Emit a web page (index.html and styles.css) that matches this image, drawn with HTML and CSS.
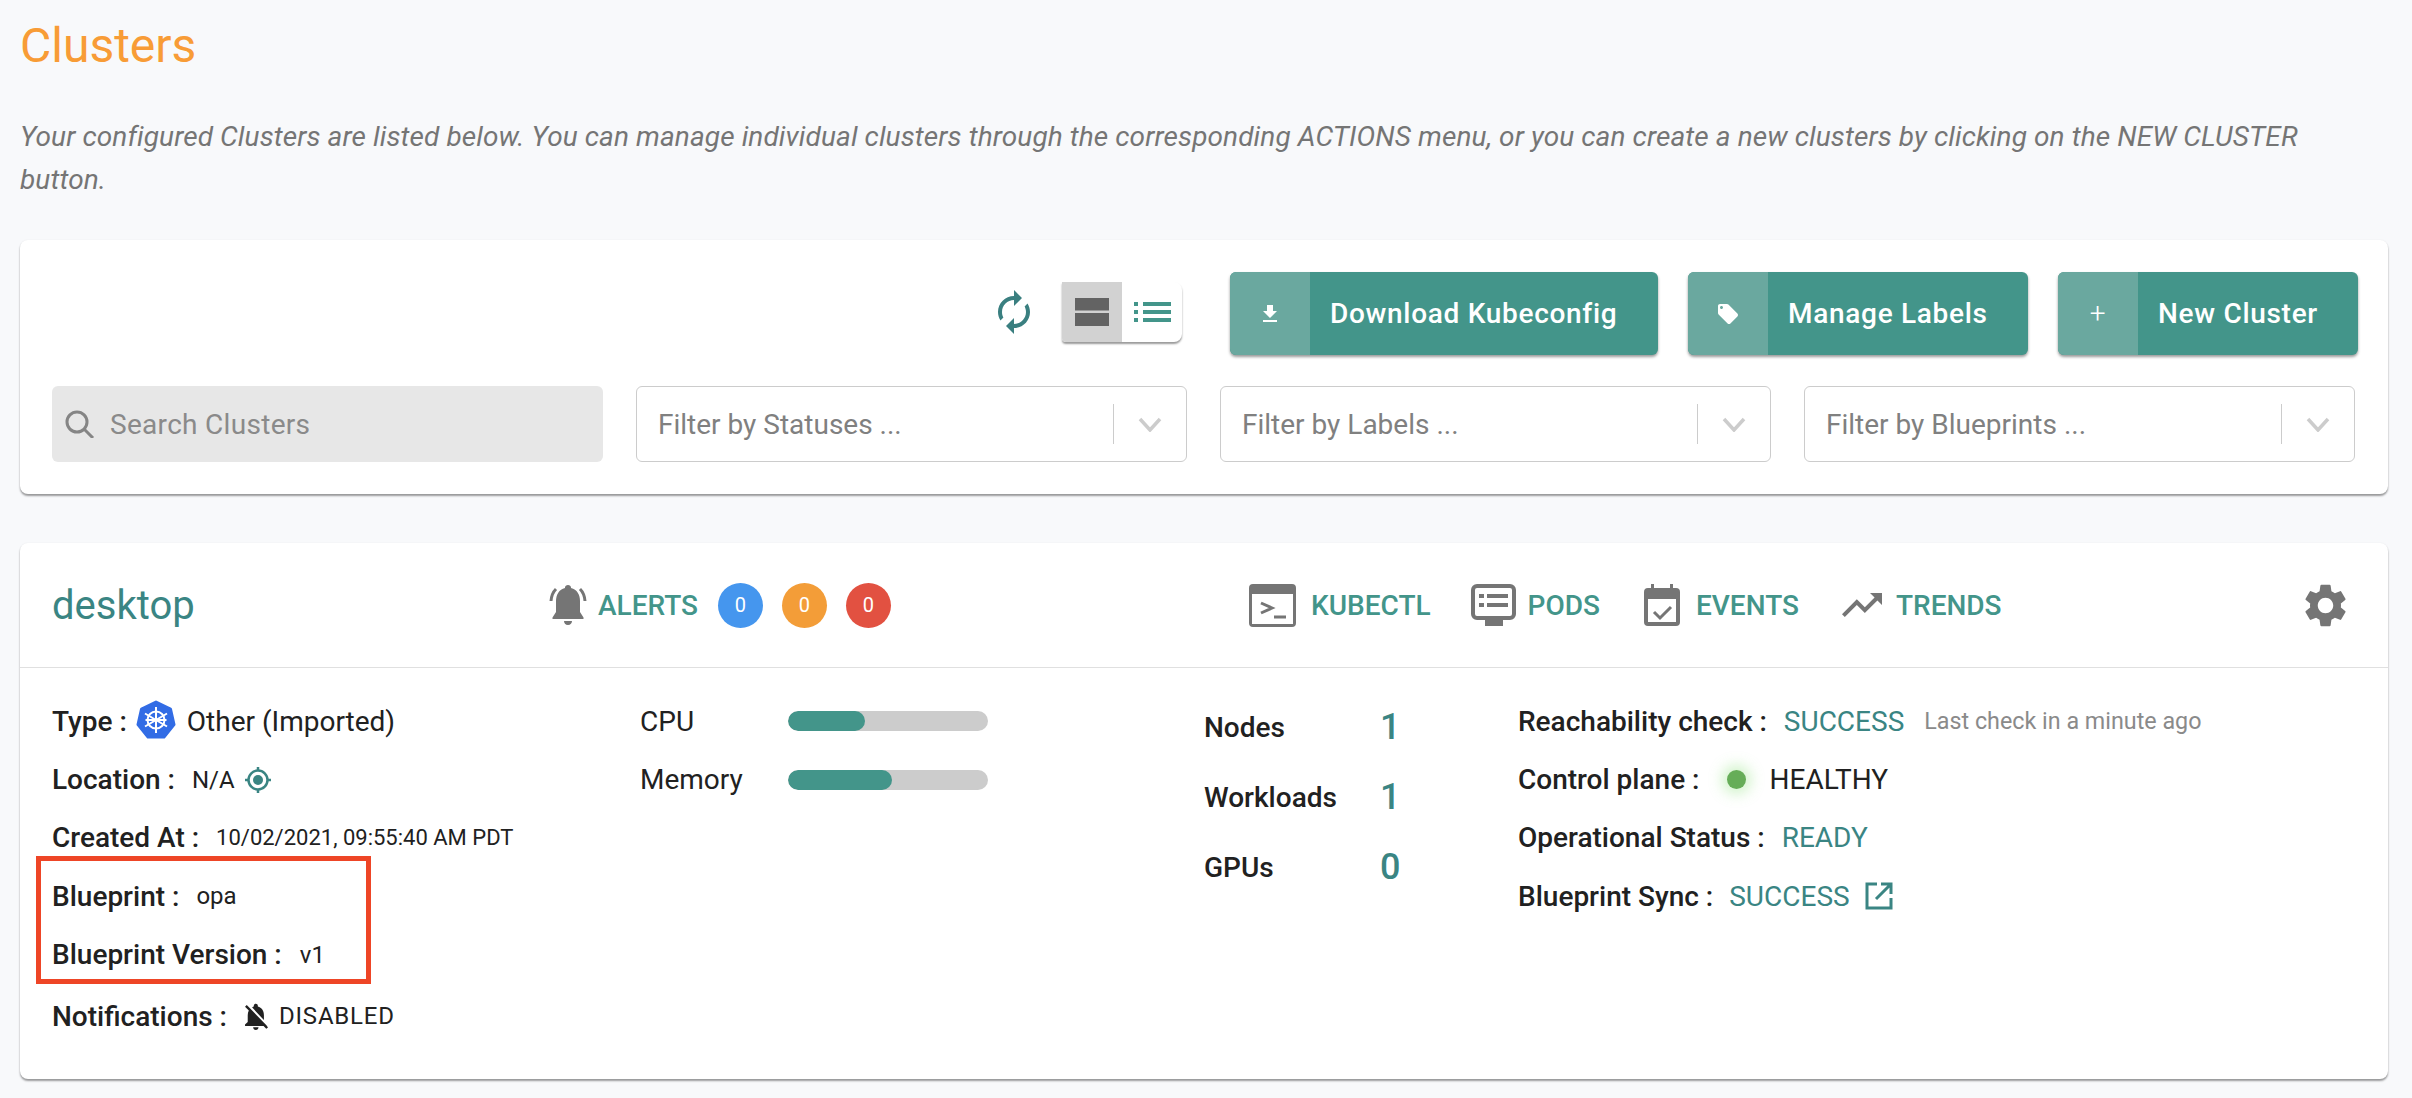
FILE: index.html
```html
<!DOCTYPE html>
<html lang="en">
<head>
<meta charset="utf-8">
<title>Clusters</title>
<link rel="stylesheet" href="styles.css">
</head>
<body>
<main class="page">
  <h1 class="title">Clusters</h1>
  <p class="intro">Your configured Clusters are listed below. You can manage individual clusters through the corresponding ACTIONS menu, or you can create a new clusters by clicking on the NEW CLUSTER button.</p>

  <section class="card toolbar">
    <div class="actions">
      <svg class="refresh" viewBox="0 0 24 24"><path d="M12 6v3l4-4-4-4v3c-4.42 0-8 3.58-8 8 0 1.57.46 3.03 1.24 4.26L6.7 14.8c-.45-.83-.7-1.79-.7-2.8 0-3.31 2.69-6 6-6zm6.76 1.74L17.3 9.2c.44.84.7 1.79.7 2.8 0 3.31-2.69 6-6 6v-3l-4 4 4 4v-3c4.42 0 8-3.58 8-8 0-1.57-.46-3.03-1.24-4.26z"/></svg>
      <div class="toggle">
        <span class="toggle-on"><svg class="toggle-icon" viewBox="0 0 34 28"><rect width="34" height="12.5"/><rect y="15" width="34" height="13"/></svg></span>
        <span class="toggle-off"><svg class="toggle-icon" viewBox="0 0 37 20"><rect width="4" height="4"/><rect x="9" width="28" height="4"/><rect y="8" width="4" height="4"/><rect x="9" y="8" width="28" height="4"/><rect y="16" width="4" height="4"/><rect x="9" y="16" width="28" height="4"/></svg></span>
      </div>
      <button class="btn btn-download"><span class="btn-icon"><svg class="glyph" viewBox="0 0 24 24"><path d="M19 9h-4V3H9v6H5l7 7 7-7zM5 18v2h14v-2H5z"/></svg></span><span class="btn-label">Download Kubeconfig</span></button>
      <button class="btn btn-labels"><span class="btn-icon"><svg class="glyph" viewBox="0 0 24 24"><path d="M21.41 11.58l-9-9C12.05 2.22 11.55 2 11 2H4c-1.1 0-2 .9-2 2v7c0 .55.22 1.05.59 1.42l9 9c.36.36.86.58 1.41.58s1.05-.22 1.41-.59l7-7c.37-.36.59-.86.59-1.41s-.23-1.06-.59-1.42zM5.5 7C4.67 7 4 6.33 4 5.5S4.67 4 5.5 4 7 4.67 7 5.5 6.33 7 5.5 7z"/></svg></span><span class="btn-label">Manage Labels</span></button>
      <button class="btn btn-new"><span class="btn-icon btn-plus">+</span><span class="btn-label">New Cluster</span></button>
    </div>
    <div class="filters">
      <div class="search">
        <svg class="search-icon" viewBox="0 0 30 28"><circle cx="12" cy="12" r="10"/><path d="M19 19l9 9"/></svg>
        <span>Search Clusters</span>
      </div>
      <div class="select"><span class="select-text">Filter by Statuses ...</span><span class="select-sep"></span><svg class="chevron" viewBox="0 0 24 15"><path d="M2 2l10 11L22 2"/></svg></div>
      <div class="select"><span class="select-text">Filter by Labels ...</span><span class="select-sep"></span><svg class="chevron" viewBox="0 0 24 15"><path d="M2 2l10 11L22 2"/></svg></div>
      <div class="select"><span class="select-text">Filter by Blueprints ...</span><span class="select-sep"></span><svg class="chevron" viewBox="0 0 24 15"><path d="M2 2l10 11L22 2"/></svg></div>
    </div>
  </section>

  <section class="card cluster">
    <header class="cluster-head">
      <h2 class="cluster-name">desktop</h2>
      <div class="alerts">
        <svg class="bell" viewBox="0 0 44 40"><path d="M22 40c2.600 0 4-1.700 4-4h-8c0 2.300 1.400 4 4 4zM34 27V16c0-6.400-3-11.700-9-13.100V2.500C25 1 23.700 0 22 0s-3 1-3 2.500v.4C13 4.300 10 9.600 10 16v11l-3.500 5.500V34h31v-1.500L34 27z"/><path class="bell-wave" d="M5 16c.4-5 2-9 5-12M39 16c-.4-5-2-9-5-12"/></svg>
        <span class="link-label alerts-label">ALERTS</span>
        <span class="dot dot-blue">0</span>
        <span class="dot dot-orange">0</span>
        <span class="dot dot-red">0</span>
      </div>
      <nav class="links">
        <a class="link link-kubectl"><svg class="terminal" viewBox="0 0 47 43"><path fill-rule="evenodd" d="M4 0h39a4 4 0 0 1 4 4v35a4 4 0 0 1-4 4H4a4 4 0 0 1-4-4V4a4 4 0 0 1 4-4zM3 10v30h41V10z"/><path class="icon-stroke" d="M12 19l11 5-11 5M25 33h12"/></svg><span class="link-label">KUBECTL</span></a>
        <a class="link link-pods"><svg class="pods" viewBox="0 0 45 42"><path fill-rule="evenodd" d="M6 0h33a6 6 0 0 1 6 6v24a6 6 0 0 1-6 6h-7v6H14v-6H6a6 6 0 0 1-6-6V6a6 6 0 0 1 6-6zM6 4a2 2 0 0 0-2 2v24a2 2 0 0 0 2 2h33a2 2 0 0 0 2-2V6a2 2 0 0 0-2-2z"/><rect x="8" y="10" width="5" height="4"/><rect x="16" y="10" width="21" height="4"/><rect x="8" y="19" width="5" height="4"/><rect x="16" y="19" width="21" height="4"/></svg><span class="link-label">PODS</span></a>
        <a class="link link-events"><svg class="events" viewBox="0 0 36 42"><path fill-rule="evenodd" d="M7 0h3v4h16V0h3v4h3a4 4 0 0 1 4 4v30a4 4 0 0 1-4 4H4a4 4 0 0 1-4-4V8a4 4 0 0 1 4-4h3zM4 15v23h28V15z"/><path class="icon-stroke" d="M10 28l6 6 11-11"/></svg><span class="link-label">EVENTS</span></a>
        <a class="link link-trends"><svg class="trends" viewBox="2 6 20 12"><path d="M16 6l2.290 2.290-4.880 4.880-4-4L2 16.590 3.410 18l6-6 4 4 6.300-6.290L22 12V6z"/></svg><span class="link-label">TRENDS</span></a>
      </nav>
      <svg class="gear" viewBox="2.500 2 19 20"><path d="M19.140 12.940c.04-.3.06-.61.06-.94 0-.32-.02-.64-.07-.94l2.030-1.580c.18-.14.23-.41.12-.61l-1.920-3.320c-.12-.22-.37-.29-.59-.22l-2.390.96c-.5-.38-1.030-.7-1.620-.94l-.36-2.540c-.04-.24-.24-.41-.48-.41h-3.840c-.24 0-.43.17-.47.41l-.36 2.540c-.59.24-1.130.57-1.620.94l-2.390-.96c-.22-.08-.47 0-.59.22L2.740 8.870c-.12.21-.08.47.12.61l2.030 1.580c-.05.3-.09.63-.09.94s.02.64.07.94l-2.030 1.580c-.18.14-.23.41-.12.61l1.920 3.320c.12.22.37.29.59.22l2.390-.96c.5.38 1.030.7 1.620.94l.36 2.540c.05.24.24.41.48.41h3.840c.24 0 .44-.17.47-.41l.36-2.540c.59-.24 1.130-.56 1.620-.94l2.390.96c.22.08.47 0 .59-.22l1.920-3.320c.12-.22.07-.47-.12-.61l-2.010-1.580zM12 15.600c-1.980 0-3.600-1.620-3.600-3.600s1.620-3.600 3.600-3.600 3.600 1.620 3.600 3.600-1.620 3.600-3.600 3.600z"/></svg>
    </header>
    <div class="cluster-body">
      <div class="col-info">
        <div class="row"><b class="key">Type :</b>
          <svg class="kube" viewBox="0 0 40 40"><path class="kube-hept" d="M20 2l14.500 7 3.500 15.600-10 12.400H12L2 24.600 5.500 9z"/><g class="kube-wheel"><circle cx="20" cy="20" r="8.500"/><path d="M20 7v26M9 13.500l22 13M31 13.500l-22 13M9.500 20h21"/></g></svg>
          <span class="val-md val-type">Other (Imported)</span></div>
        <div class="row"><b class="key">Location :</b><span class="val-sm val-location">N/A</span>
          <svg class="target" viewBox="0 0 26 26"><circle class="target-ring" cx="13" cy="13" r="9.500"/><circle class="target-dot" cx="13" cy="13" r="5"/><path class="target-ring" d="M13 0v4M13 22v4M0 13h4M22 13h4"/></svg></div>
        <div class="row"><b class="key">Created At :</b><span class="val-xs val-created">10/02/2021, 09:55:40 AM PDT</span></div>
        <div class="highlight">
          <div class="row"><b class="key">Blueprint :</b><span class="val-sm val-blueprint">opa</span></div>
          <div class="row"><b class="key">Blueprint Version :</b><span class="val-sm val-version">v1</span></div>
        </div>
        <div class="row row-notify"><b class="key">Notifications :</b>
          <svg class="bell-off" viewBox="4 2 17 20"><path d="M20 18.690L7.840 6.140 5.270 3.490 4 4.760l2.800 2.800v.01c-.52.99-.8 2.160-.8 3.420v5l-2 2v1h13.730l2 2L21 20.190l-1-1.500zM12 22c1.110 0 2-.89 2-2h-4c0 1.110.89 2 2 2zm6-7.320V11c0-3.080-1.640-5.640-4.500-6.320V4c0-.83-.67-1.500-1.500-1.500s-1.500.67-1.500 1.500v.68c-.15.03-.29.08-.42.12-.1.03-.2.07-.3.11h-.01c-.2.08-.4.17-.59.27-.01 0-.01 0-.02.01L18 14.680z"/></svg>
          <span class="val-sm val-disabled">DISABLED</span></div>
      </div>
      <div class="col-usage">
        <div class="usage"><span class="usage-name">CPU</span><span class="bar"><span class="bar-fill" style="width:77px"></span></span></div>
        <div class="usage"><span class="usage-name">Memory</span><span class="bar"><span class="bar-fill" style="width:104px"></span></span></div>
      </div>
      <div class="col-counts">
        <div class="count"><span class="count-name">Nodes</span><span class="count-num">1</span></div>
        <div class="count"><span class="count-name">Workloads</span><span class="count-num">1</span></div>
        <div class="count"><span class="count-name">GPUs</span><span class="count-num">0</span></div>
      </div>
      <div class="col-status">
        <div class="row"><b class="key">Reachability check :</b><span class="val-md teal val-reach">SUCCESS</span><span class="last-check">Last check in a minute ago</span></div>
        <div class="row"><b class="key">Control plane :</b><span class="health-dot"></span><span class="val-md">HEALTHY</span></div>
        <div class="row"><b class="key">Operational Status :</b><span class="val-md teal val-ready">READY</span></div>
        <div class="row"><b class="key">Blueprint Sync :</b><span class="val-md teal val-sync">SUCCESS</span>
          <svg class="external" viewBox="0 0 28 28"><path d="M12 2H2v24h24V16M16 2h10v10M26 2L11 17"/></svg></div>
      </div>
    </div>
  </section>
</main>
</body>
</html>
```

FILE: styles.css
```css
*, *::after { box-sizing: border-box; }
html, body { margin: 0; padding: 0; }
body {
  background: #f8f9fb;
  color: #212121;
  font-family: Roboto, "Liberation Sans", sans-serif;
  font-size: 28px;
  height: 1098px;
  overflow: hidden;
}
.page { padding: 17px 24px 0 20px; }
.title {
  margin: 0;
  font-size: 48px;
  line-height: 58px;
  font-weight: 400;
  color: #f89c36;
}
.intro {
  margin: 40px 0 0;
  max-width: 2320px;
  font-size: 28px;
  letter-spacing: .1px;
  line-height: 43px;
  font-style: italic;
  color: #757575;
}
.card {
  background: #fff;
  border-radius: 8px;
  box-shadow: 0 2px 2px rgba(0,0,0,.38), 0 0 2px rgba(0,0,0,.06);
}
.toolbar { margin-top: 39px; height: 254px; padding: 32px 33px 0 32px; }
.actions { display: flex; align-items: center; justify-content: flex-end; height: 83px; margin-right: -3px; }
.refresh { width: 48px; height: 48px; fill: #3a7f80; margin-right: 24px; margin-top: -3px; }
.toggle {
  display: flex;
  width: 120px;
  height: 60px;
  margin-right: 48px;
  margin-top: -3px;
  border-radius: 0 8px 8px 4px;
  overflow: hidden;
  background: #fff;
  box-shadow: 0 2px 2px rgba(0,0,0,.4);
}
.toggle-on, .toggle-off { width: 60px; display: flex; align-items: center; justify-content: center; }
.toggle-on { background: #d2d2d2; fill: #636363; }
.toggle-off { fill: #43958a; }
.toggle-on .toggle-icon { width: 34px; height: 28px; }
.toggle-off .toggle-icon { width: 37px; height: 20px; }
.btn {
  display: flex;
  align-items: center;
  height: 83px;
  padding: 0;
  border: 0;
  border-radius: 6px;
  overflow: hidden;
  background: #43958a;
  color: #fff;
  font: 500 28px Roboto, sans-serif;
  letter-spacing: .7px;
  box-shadow: 0 2px 3px rgba(0,0,0,.4);
}
.btn + .btn { margin-left: 30px; }
.btn-icon {
  width: 80px;
  height: 100%;
  background: #6aa89f;
  display: flex;
  align-items: center;
  justify-content: center;
}
.btn-label { padding-left: 20px; white-space: nowrap; }
.btn-download { width: 428px; }
.btn-labels { width: 340px; }
.btn-new { width: 300px; }
.glyph { width: 24px; height: 24px; fill: #fff; }
.btn-plus { font-weight: 300; font-size: 28px; }
.filters { display: grid; grid-template-columns: repeat(4, 1fr); gap: 33px; margin-top: 31px; }
.search {
  height: 76px;
  background: #e7e7e7;
  border-radius: 6px;
  display: flex;
  align-items: center;
  gap: 15px;
  padding-left: 13px;
  color: #8a8a8a;
  letter-spacing: .3px;
}
.search-icon { width: 30px; height: 28px; fill: none; stroke: #858585; stroke-width: 3; }
.select {
  height: 76px;
  border: 1.5px solid #ccc;
  border-radius: 6px;
  display: flex;
  align-items: center;
  padding: 0 24px 0 21px;
  color: #808080;
}
.select-text { flex: 1; white-space: nowrap; }
.select-sep { width: 1px; height: 40px; background: #ccc; margin-right: 24px; }
.chevron { width: 24px; height: 15px; fill: none; stroke: #ccc; stroke-width: 3.5; }
.cluster { margin-top: 49px; height: 536px; }
.cluster-head {
  display: flex;
  align-items: center;
  height: 125px;
  border-bottom: 1px solid #e0e0e0;
  padding: 0 42px 0 32px;
}
.cluster-name {
  width: 495px;
  margin: 0;
  font-size: 40px;
  font-weight: 400;
  color: #3a8583;
}
.alerts { display: flex; align-items: center; }
.bell { width: 44px; height: 40px; fill: #757575; margin-left: -1px; }
.bell-wave { fill: none; stroke: #757575; stroke-width: 3; }
.alerts-label { margin: 0 20px 0 8px; }
.link-label { font-weight: 500; font-size: 28px; color: #43958a; }
.dot {
  width: 45px;
  height: 45px;
  border-radius: 50%;
  margin-right: 19px;
  display: flex;
  align-items: center;
  justify-content: center;
  color: #fff;
  font-size: 20px;
}
.dot-blue { background: #4596ee; }
.dot-orange { background: #f39d38; }
.dot-red { background: #e25141; }
.links { display: flex; align-items: center; margin-left: 339px; }
.link { display: flex; align-items: center; }
.link-kubectl { margin-right: 40px; gap: 15px; }
.link-pods { margin-right: 44px; gap: 12px; }
.link-events { margin-right: 43px; gap: 16px; }
.link-trends { gap: 14px; }
.terminal { width: 47px; height: 43px; fill: #757575; }
.pods { width: 45px; height: 42px; fill: #757575; }
.events { width: 36px; height: 42px; fill: #757575; }
.trends { width: 40px; height: 24px; fill: #757575; }
.icon-stroke { fill: none; stroke: #757575; stroke-width: 3; }
.gear { width: 41px; height: 43px; fill: #757575; margin-left: auto; }
.cluster-body {
  display: grid;
  grid-template-columns: 588px 564px 314px 1fr;
  padding: 24px 0 0 32px;
}
.row { display: flex; align-items: center; height: 58.400px; white-space: nowrap; }
.key { font-weight: 500; font-size: 28px; color: #212121; }
.val-md { font-size: 28px; }
.val-sm { font-size: 24px; }
.val-xs { font-size: 22px; }
.kube { width: 40px; height: 40px; margin: -2px 11px 0 9px; }
.kube-hept { fill: #326ce5; stroke: #326ce5; stroke-width: 3; stroke-linejoin: round; }
.kube-wheel { fill: none; stroke: #fff; stroke-width: 2; }
.val-location { margin-left: 17px; }
.target { width: 26px; height: 26px; margin-left: 10px; }
.target-ring { fill: none; stroke: #3a8583; stroke-width: 2.500; }
.target-dot { fill: #3a8583; }
.val-created { margin-left: 17px; }
.highlight { position: relative; }
.highlight::after {
  content: "";
  position: absolute;
  left: -16px;
  top: -11px;
  bottom: 0;
  width: 335px;
  border: 5px solid #ee4526;
}
.val-blueprint { margin-left: 17px; }
.val-version { margin-left: 18px; }
.row-notify { margin-top: 3px; }
.bell-off { width: 25px; height: 27px; margin-left: 17px; fill: #212121; }
.val-disabled { margin-left: 10px; letter-spacing: .8px; }
.usage { display: flex; align-items: center; height: 58.400px; }
.usage-name { width: 148px; font-size: 28px; }
.bar { display: block; width: 200px; height: 20px; border-radius: 10px; background: #ccc; overflow: hidden; }
.bar-fill { display: block; height: 100%; border-radius: 10px; background: #43958a; }
.col-counts { padding-top: 0; }
.count { display: flex; align-items: center; height: 70px; }
.count-name { width: 176px; font-weight: 500; font-size: 28px; }
.count-num { font-weight: 500; font-size: 36px; color: #3a8583; }
.teal { color: #3a8583; }
.val-reach { margin-left: 17px; }
.last-check { margin-left: 20px; font-size: 23.300px; color: #8a8a8a; }
.health-dot {
  width: 19px;
  height: 19px;
  border-radius: 50%;
  margin: 0 24px 0 27px;
  background: #66ad58;
  box-shadow: 0 0 14px 5px rgba(120,220,100,.35);
}
.val-ready { margin-left: 17px; }
.val-sync { margin-left: 16px; }
.external { width: 28px; height: 28px; margin-left: 15px; fill: none; stroke: #3a8583; stroke-width: 3; }
```
